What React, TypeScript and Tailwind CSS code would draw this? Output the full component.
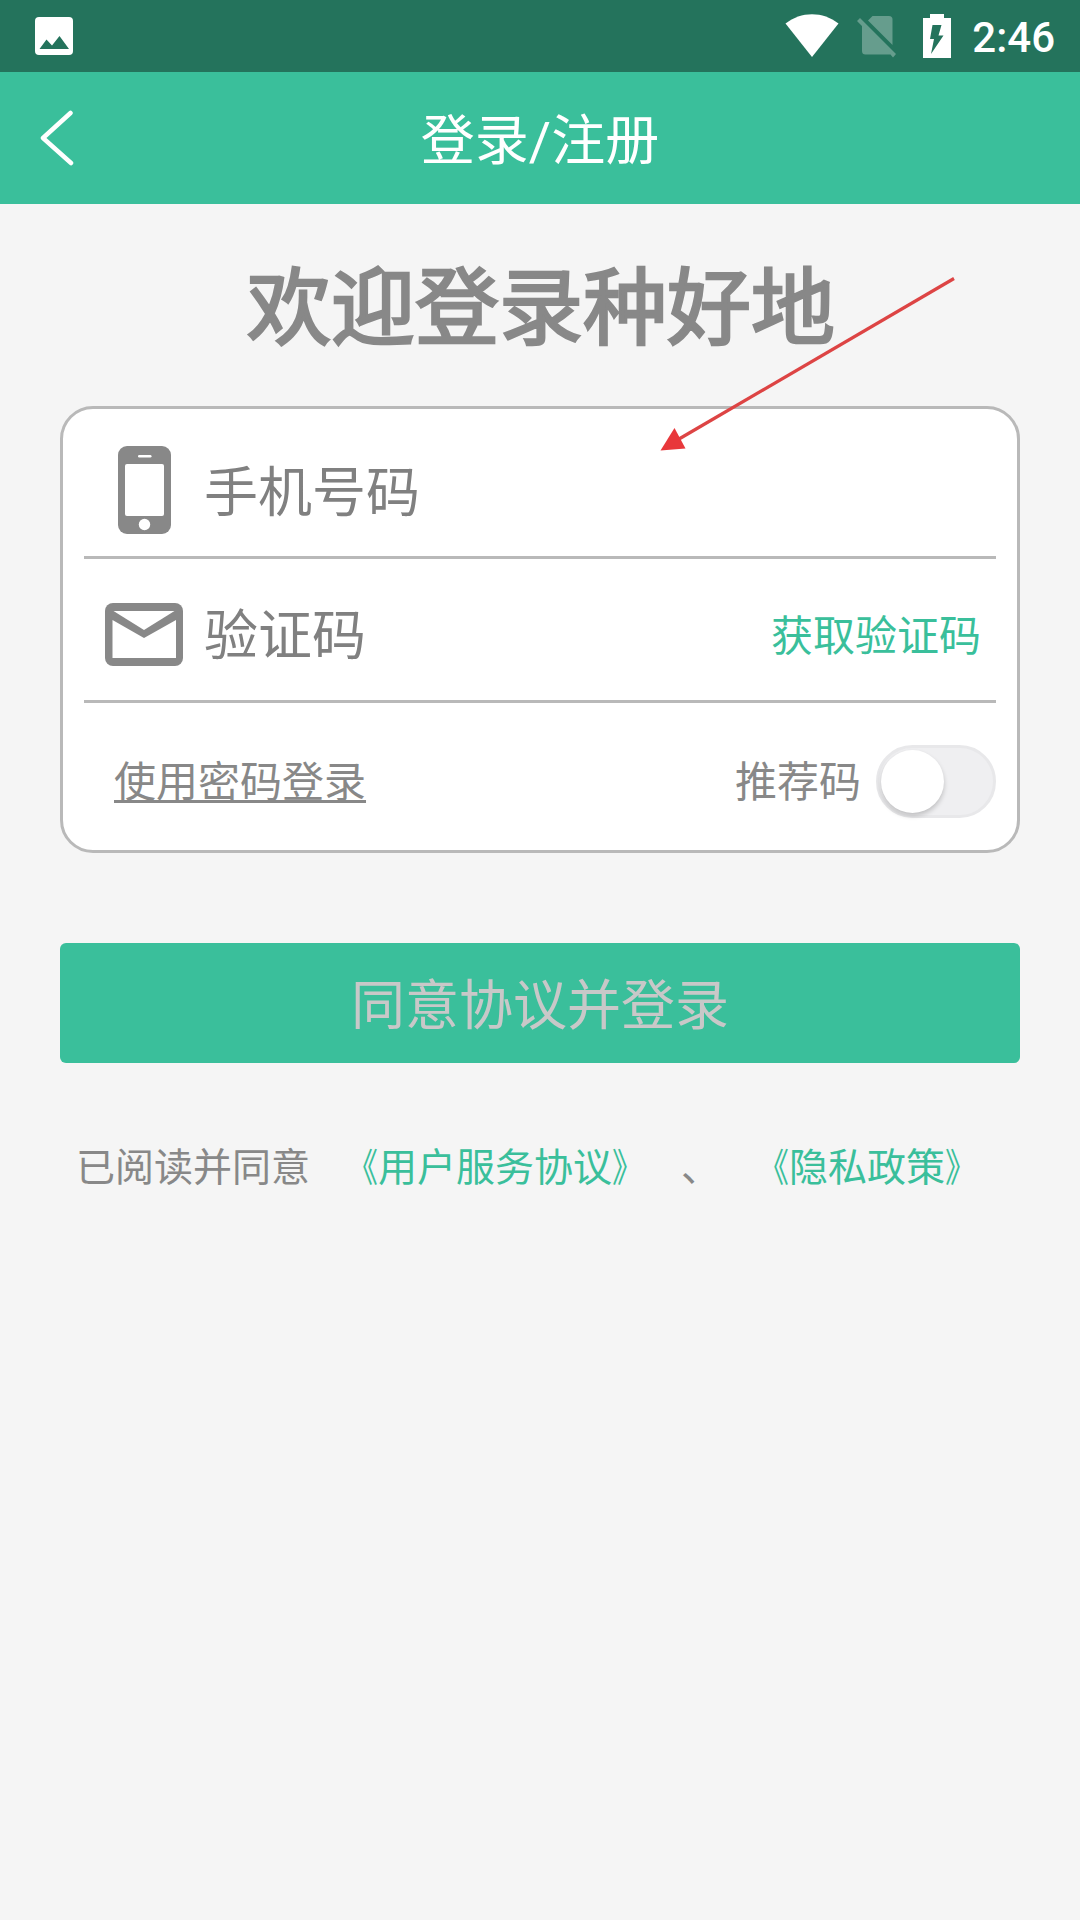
const StatusBar = () => {
  return (
    <div className="h-[72px] bg-[#24735c] flex items-center justify-between pl-[35px] pr-[25px] text-white">
      <svg width="38" height="38" viewBox="0 0 38 38">
        <rect width="38" height="38" rx="4" fill="#fff" />
        <path d="M4.500 32 L11.500 22.500 L17 28.500 L24.500 19 L34 32 Z" fill="#24735c" />
      </svg>
      <div className="flex items-center">
        <svg width="54" height="44" viewBox="0 0 54 44">
          <path d="M0.500 9.500 C16 -3 38 -3 53.500 9.500 L27 43 Z" fill="#fff" />
        </svg>
        <svg className="ml-[18px]" width="40" height="44" viewBox="0 0 40 44">
          <g fill="#fff" fillOpacity="0.3">
            <path d="M15.500 2 H32 Q35.500 2 35.500 5.500 V31 L11 6.500 Z" />
            <path d="M0 7 L3 4 L39 40 L36 43.500 L33.500 40.500 H8.500 Q5 40.500 5 37 V12 Z" />
          </g>
        </svg>
        <svg className="ml-[26px]" width="28" height="44" viewBox="0 0 28 44">
          <path d="M0 4 H7 V0 H21 V4 H28 V44 H0 Z" fill="#fff" />
          <path d="M9.500 11 H18.500 L15.500 21.500 H20.500 L8 40 L11 25 H7 Z" fill="#24735c" />
        </svg>
        <p className="ml-[21px] pt-[3px] font-['Roboto',sans-serif] font-medium text-[42px] leading-[50px]">2:46</p>
      </div>
    </div>
  );
};

const Header = () => {
  return (
    <div className="h-[132px] bg-[#3abf9b] flex items-center justify-between px-[39px] text-white">
      <svg width="36" height="56" viewBox="0 0 36 56" fill="none">
        <path d="M31.500 3 L4 28 L32 53" stroke="#fff" strokeWidth="4.500" strokeLinecap="round" strokeLinejoin="round" />
      </svg>
      <h1 className="pt-[3px] text-[54px] leading-[54px]">
        登录<span className="font-['Roboto',sans-serif] leading-none">/</span>注册
      </h1>
      <div className="w-9" />
    </div>
  );
};

const PhoneIcon = () => (
  <svg width="53" height="88" viewBox="0 0 53 88">
    <rect width="53" height="88" rx="9" fill="#888" />
    <rect x="7" y="18" width="39" height="52" rx="2" fill="#fff" />
    <rect x="20" y="9" width="13.500" height="2.500" rx="1.200" fill="#fff" />
    <circle cx="26.500" cy="78.500" r="5.700" fill="#fff" />
  </svg>
);

const MailIcon = () => (
  <svg width="78" height="63" viewBox="0 0 78 63">
    <rect width="78" height="63" rx="8" fill="#888" />
    <path d="M8.500 8 H69.500 L39 27 Z" fill="#fff" />
    <path d="M7.500 17 L39 35 L71 17 V55 H7.500 Z" fill="#fff" />
  </svg>
);

const Arrow = () => (
  <svg className="absolute left-[651px] top-[269px] pointer-events-none" width="320" height="190" viewBox="0 0 320 190">
    <path d="M303 9.500 L28 170" stroke="#dd4444" strokeWidth="3.200" />
    <path d="M9.500 181.500 L23.500 159 L34.500 179.500 Z" fill="#e8383b" />
  </svg>
);

// link with slightly condensed 《 》
const Agreement = ({ children }: { children: string }) => (
  <p className="text-[#3abf9b] flex">
    <span className="inline-block origin-right scale-x-80">《</span>
    <span>{children}</span>
    <span className="inline-block origin-left scale-x-80">》</span>
  </p>
);

export default function App() {
  return (
    <div className="relative w-[1080px] h-[1920px] bg-[#f5f5f5] text-[#888] font-['Noto_Sans_CJK_SC',sans-serif]">
      <StatusBar />
      <Header />

      <h2 className="mt-14 pl-[2px] text-center text-[84px] leading-[84px] [-webkit-text-stroke:2.6px_#888]">
        欢迎登录种好地
      </h2>

      <div className="mx-[60px] mt-[62px] h-[447px] rounded-[33px] border-[3px] border-[#b9b9b9] bg-white px-[21px]">
        <div className="h-[150px] flex items-center border-b-[3px] border-[#b9b9b9] pl-[34px] pt-[15px]">
          <PhoneIcon />
          <p className="ml-[33px] pb-[3px] text-[54px] leading-[54px] text-[#808080]">手机号码</p>
        </div>
        <div className="h-36 flex items-center border-b-[3px] border-[#b9b9b9] pl-[21px] pr-[15px] pt-[10px]">
          <MailIcon />
          <p className="ml-[21px] pb-[5px] text-[54px] leading-[54px] text-[#808080]">验证码</p>
          <p className="ml-auto pb-1 text-[42px] leading-[42px] text-[#3abf9b]">获取验证码</p>
        </div>
        <div className="h-[147px] flex items-center pl-[30px] pt-[9px]">
          <p className="pb-1 text-[42px] leading-[42px] underline decoration-[3px] underline-offset-[3px] [text-decoration-skip-ink:none]">
            使用密码登录
          </p>
          <p className="ml-auto pb-1 text-[42px] leading-[42px]">推荐码</p>
          <div className="ml-[15px] w-[120px] h-[73px] rounded-full border-[3px] border-[#e8e8ea] bg-[#efeff1] flex items-center pl-[2px]">
            <div className="w-[63px] h-[63px] rounded-full bg-white shadow-[0_3px_5px_rgba(0,0,0,0.2)]" />
          </div>
        </div>
      </div>

      <button className="mx-[60px] mt-[90px] w-[960px] h-[120px] rounded-[6px] bg-[#3abf9b] text-[#c8c8c8] text-[54px] leading-[54px] pb-[3px] flex items-center justify-center">
        同意协议并登录
      </button>

      <div className="mt-[82px] pl-[76px] flex text-[39px] leading-[39px]">
        <p className="mr-[29px]">已阅读并同意</p>
        <Agreement>用户服务协议</Agreement>
        <p className="mx-[30px]">、</p>
        <Agreement>隐私政策</Agreement>
      </div>

      <Arrow />
    </div>
  );
}
